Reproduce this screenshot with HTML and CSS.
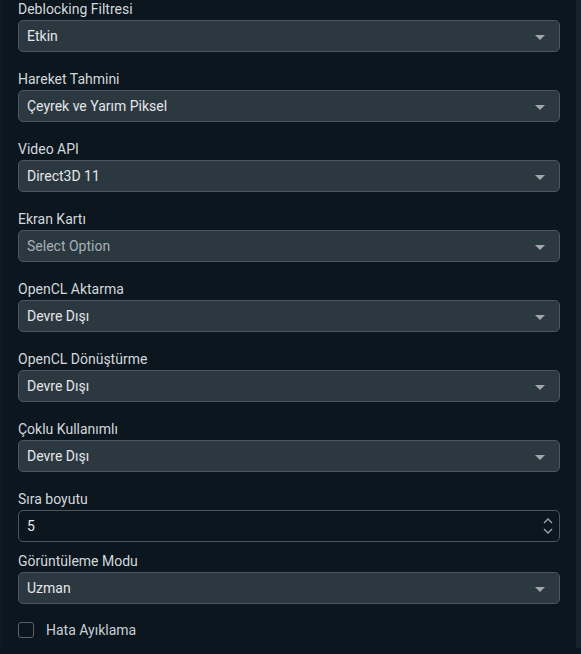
FILE: index.html
```html
<!DOCTYPE html>
<html lang="tr">
<head>
<meta charset="utf-8">
<title>Ayarlar</title>
<link rel="stylesheet" href="styles.css">
</head>
<body>
<div class="frame">
  <div class="panel">
    <div class="field">
      <div class="label">Deblocking Filtresi</div>
      <div class="select"><span>Etkin</span><i class="caret"></i></div>
    </div>
    <div class="field">
      <div class="label">Hareket Tahmini</div>
      <div class="select"><span>Çeyrek ve Yarım Piksel</span><i class="caret"></i></div>
    </div>
    <div class="field">
      <div class="label">Video API</div>
      <div class="select"><span>Direct3D 11</span><i class="caret"></i></div>
    </div>
    <div class="field">
      <div class="label">Ekran Kartı</div>
      <div class="select"><span class="placeholder">Select Option</span><i class="caret"></i></div>
    </div>
    <div class="field">
      <div class="label">OpenCL Aktarma</div>
      <div class="select"><span>Devre Dışı</span><i class="caret"></i></div>
    </div>
    <div class="field">
      <div class="label">OpenCL Dönüştürme</div>
      <div class="select"><span>Devre Dışı</span><i class="caret"></i></div>
    </div>
    <div class="field">
      <div class="label">Çoklu Kullanımlı</div>
      <div class="select"><span>Devre Dışı</span><i class="caret"></i></div>
    </div>
    <div class="field">
      <div class="label">Sıra boyutu</div>
      <div class="number"><span>5</span>
        <svg class="spin" width="10" height="18" viewBox="0 0 10 18">
          <path d="M1 6 L5 2 L9 6" fill="none" stroke="#9aa1a6" stroke-width="1.4"/>
          <path d="M1 12 L5 16 L9 12" fill="none" stroke="#9aa1a6" stroke-width="1.4"/>
        </svg>
      </div>
    </div>
    <div class="field compact">
      <div class="label">Görüntüleme Modu</div>
      <div class="select"><span>Uzman</span><i class="caret"></i></div>
    </div>
    <label class="check">
      <span class="box"></span>
      <span>Hata Ayıklama</span>
    </label>
  </div>
  <div class="rail"></div>
</div>
</body>
</html>
```

FILE: styles.css
```css
html, body {
  margin: 0;
  padding: 0;
  background: #0b161e;
}
body {
  font-family: Roboto, "Noto Sans", Arial, sans-serif;
  font-size: 14px;
  color: #e3e6e9;
}
.frame {
  display: flex;
  height: 648px;
}
.panel {
  width: 576px;
  flex: none;
  padding: 0 16px 0 16px;
  border-left: 2px solid #0e1a22;
  box-sizing: border-box;
}
.rail {
  flex: 1;
  background: #17232b;
}
.field {
  margin-bottom: 18px;
}
.field.compact {
  margin-top: -8px;
}
.label {
  height: 18px;
  line-height: 18px;
  margin-bottom: 2px;
  color: #d3d8dc;
}
.select, .number {
  height: 32px;
  box-sizing: border-box;
  border: 1px solid #4b565d;
  border-radius: 5px;
  display: flex;
  align-items: center;
  justify-content: space-between;
  padding: 0 14px 0 8px;
}
.select {
  background: #2c3840;
}
.number {
  background: transparent;
  padding-right: 6px;
}
.placeholder {
  color: #a8b0b6;
}
.caret {
  width: 0;
  height: 0;
  border-left: 5px solid transparent;
  border-right: 5px solid transparent;
  border-top: 5px solid #a3a7aa;
  margin-top: 2px;
}
.spin {
  display: block;
}
.check {
  display: flex;
  align-items: center;
  gap: 12px;
  margin-top: 1px;
  color: #c9ced2;
}
.box {
  width: 16px;
  height: 16px;
  box-sizing: border-box;
  border: 1px solid #58636a;
  border-radius: 3px;
}
```
